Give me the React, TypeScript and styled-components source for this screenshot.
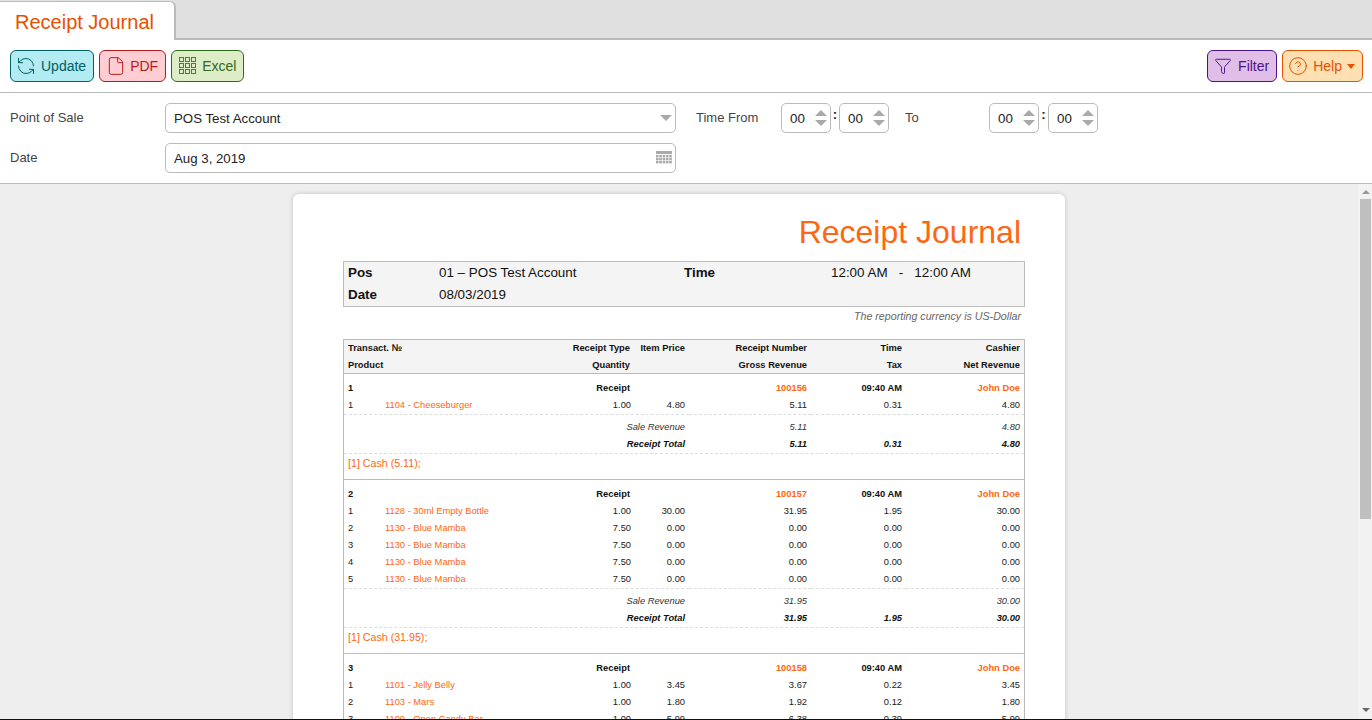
import React from "react";
import styled, { createGlobalStyle } from "styled-components";
import { RefreshCcw, File, Funnel, CircleHelp } from "lucide-react";

const GlobalStyle = createGlobalStyle`
  html, body {
    margin: 0;
    height: 100%;
    overflow: hidden;
    font-family: "Liberation Sans", Arial, sans-serif;
  }
`;

const palette = {
  update: { bg: "#b2ebf2", fg: "#006064", gap: 6, shift: -2 },
  pdf: { bg: "#ffcdd2", fg: "#b71c1c", gap: 5, shift: -1 },
  excel: { bg: "#dcedc8", fg: "#33691e", gap: 6, shift: 0 },
  filter: { bg: "#e1bee7", fg: "#4a148c", gap: 7, shift: -1 },
  help: { bg: "#ffe0b2", fg: "#e65100", gap: 6, shift: -2 },
};

type Tone = keyof typeof palette;

const Page = styled.div`
  display: flex;
  flex-direction: column;
  height: 720px;
  box-sizing: border-box;
  border-bottom: 1px solid #0d0d2b;
  background: #fff;
`;

const TabStrip = styled.div`
  display: flex;
  flex: none;
  height: 40px;
  box-sizing: border-box;
  background: #e0e0e0;
  border-bottom: 2px solid #bbb;
`;

const Tab = styled.div`
  height: 39px;
  box-sizing: border-box;
  width: 176px;
  margin-top: 1px;
  padding: 8px 0 0 15px;
  background: #fff;
  border: 1px solid #bbb;
  border-width: 1px 2px 0 0;
  border-top-right-radius: 6px;
  color: #e65100;
  font-size: 20px;
  line-height: 24px;
`;

const Toolbar = styled.div`
  display: flex;
  flex: none;
  justify-content: space-between;
  height: 53px;
  box-sizing: border-box;
  padding: 10px 9px 0 10px;
  border-bottom: 1px solid #bbb;
`;

const ButtonGroup = styled.div`
  display: flex;
  gap: 5px;
`;

const ToolButton = styled.div<{ $tone: Tone }>`
  display: flex;
  align-items: center;
  gap: ${(p) => palette[p.$tone].gap}px;
  height: 32px;
  box-sizing: border-box;
  padding: 0 7px;
  border: 1px solid ${(p) => palette[p.$tone].fg};
  border-radius: 6px;
  background: ${(p) => palette[p.$tone].bg};
  color: ${(p) => palette[p.$tone].fg};
  font-size: 14px;

  svg {
    flex: none;
    margin-left: ${(p) => palette[p.$tone].shift}px;
    margin-right: -1px;
  }
`;

const Caret = styled.span`
  width: 0;
  height: 0;
  margin-left: -1px;
  border: 4px solid transparent;
  border-top: 5px solid #e65100;
  border-bottom: 0;
`;

const FilterForm = styled.div`
  display: flex;
  flex: none;
  flex-direction: column;
  gap: 10px;
  height: 91px;
  box-sizing: border-box;
  padding: 10px;
  border-bottom: 1px solid #bbb;
`;

const FormRow = styled.div`
  display: flex;
  align-items: center;
  height: 30px;
`;

const FieldLabel = styled.div<{ $width: number; $gap?: number }>`
  width: ${(p) => p.$width}px;
  margin-left: ${(p) => p.$gap ?? 0}px;
  margin-top: -2px;
  color: #444;
  font-size: 13px;
`;

const Field = styled.div`
  display: flex;
  align-items: center;
  justify-content: space-between;
  width: 511px;
  height: 30px;
  box-sizing: border-box;
  padding: 0 3px 0 8px;
  border: 1px solid #bbb;
  border-radius: 5px;
  color: #222;
  font-size: 13.25px;
`;

const SelectArrow = styled.span`
  width: 0;
  height: 0;
  border: 6px solid transparent;
  border-top: 6px solid #aaa;
  border-bottom: 0;
`;

const Spinner = styled.div`
  display: flex;
  align-items: center;
  justify-content: space-between;
  width: 50px;
  height: 30px;
  box-sizing: border-box;
  padding: 0 3px 0 8px;
  border: 1px solid #bbb;
  border-radius: 5px;
  color: #222;
  font-size: 13.33px;
`;

const SpinArrows = styled.div`
  display: flex;
  flex-direction: column;
  gap: 4px;
`;

const SpinArrow = styled.span<{ $up?: boolean }>`
  width: 0;
  height: 0;
  border: 6px solid transparent;
  border-${(p) => (p.$up ? "bottom" : "top")}: 6px solid #aaa;
  border-${(p) => (p.$up ? "top" : "bottom")}: 0;
`;

const Colon = styled.div<{ $width: number }>`
  width: ${(p) => p.$width}px;
  margin-top: -8px;
  text-align: center;
  color: #222;
  font-size: 13.33px;
  font-weight: bold;
`;

const ReportArea = styled.div`
  display: flex;
  flex: 1;
  min-height: 0;
`;

const ReportScroller = styled.div`
  flex: 1;
  min-width: 0;
  overflow: hidden;
  background: #eee;
`;

const ScrollRail = styled.div`
  display: flex;
  flex: none;
  flex-direction: column;
  align-items: flex-start;
  width: 14px;
  background: #f2f2f2;
`;

const RailArrow = styled.span<{ $down?: boolean }>`
  width: 0;
  height: 0;
  margin: ${(p) => (p.$down ? "auto 0 7px 4px" : "6px 0 0 4px")};
  border: 4px solid transparent;
  border-${(p) => (p.$down ? "top" : "bottom")}: 4px solid ${(p) => (p.$down ? "#666" : "#999")};
  border-${(p) => (p.$down ? "bottom" : "top")}: 0;
`;

const RailThumb = styled.div`
  width: 11px;
  height: 320px;
  margin: 5px 0 0 2px;
  background: #bfbfbf;
`;

const ReportCard = styled.div`
  width: 772px;
  box-sizing: border-box;
  margin: 10px auto;
  padding: 20px 40px 40px 50px;
  background: #fff;
  border-radius: 6px;
  box-shadow: 0 0 5px rgba(0, 0, 0, 0.18);
`;

const ReportTitle = styled.div`
  height: 47px;
  padding-right: 4px;
  text-align: right;
  color: #ff6610;
  font-size: 32px;
  line-height: 37px;
`;

const InfoTable = styled.table`
  width: 682px;
  table-layout: fixed;
  border-collapse: separate;
  border-spacing: 0;
  border: 1px solid #bbb;
  background: #f4f4f4;
  color: #111;
  font-size: 13.4px;

  td {
    height: 22px;
    box-sizing: border-box;
    padding: 0 4px 2px;
    white-space: pre;
  }
`;

const InfoLabel = styled.td`
  font-weight: bold;
`;

const CurrencyNote = styled.div`
  height: 32px;
  padding: 2px 4px 0 0;
  box-sizing: border-box;
  text-align: right;
  color: #666;
  font-size: 10.67px;
  font-style: italic;
  line-height: 15px;
`;

const JournalTable = styled.table`
  width: 682px;
  table-layout: fixed;
  border-collapse: separate;
  border-spacing: 0;
  border: 1px solid #bbb;
  color: #222;
  font-size: 9.33px;

  td {
    padding: 0 4px 1px;
    height: 17px;
    box-sizing: border-box;
    white-space: nowrap;
    text-align: right;
    line-height: 16px;
  }
`;

const HeadRow = styled.tr<{ $last?: boolean }>`
  background: #f4f4f4;
  color: #111;
  font-weight: bold;

  td {
    padding-bottom: ${(p) => (p.$last ? 0 : 1)}px;
    border-bottom: ${(p) => (p.$last ? "1px solid #bbb" : "0")};
  }
`;

const GroupRow = styled.tr`
  color: #111;
  font-weight: bold;

  td {
    height: 23px;
    padding-top: 6px;
  }
`;

const SumRow = styled.tr<{ $first?: boolean; $total?: boolean }>`
  font-style: italic;
  font-weight: ${(p) => (p.$total ? "bold" : "normal")};
  color: ${(p) => (p.$total ? "#111" : "#333")};

  td {
    height: ${(p) => (p.$first ? 22 : 17)}px;
    padding-top: ${(p) => (p.$first ? 4 : 0)}px;
    border-top: ${(p) => (p.$first ? "1px dashed #ddd" : "0")};
  }
`;

const PaymentCell = styled.td`
  && {
    height: 27px;
    padding: 0 4px 7px;
    border-top: 1px dashed #ddd;
    border-bottom: 1px solid #bbb;
    text-align: left;
    color: #ff6610;
    font-size: 10.67px;
  }
`;

const LeftCell = styled.td`
  && {
    text-align: left;
  }
`;

const ProductCell = styled.td`
  && {
    text-align: left;
    color: #ff6610;
  }
`;

const QtyCell = styled.td`
  && {
    padding-right: 3px;
  }
`;

const AccentCell = styled.td`
  color: #ff6610;
`;

const ExcelIcon = () => (
  <svg width="18" height="18" viewBox="0 0 18 18" fill="none" stroke="currentColor" strokeWidth="1" opacity="0.85">
    {[1, 7, 13].map((y) =>
      [1, 7, 13].map((x) => <rect key={`${x}-${y}`} x={x - 0.5} y={y - 0.5} width="4" height="4" />)
    )}
  </svg>
);

const CalendarIcon = () => (
  <svg width="16" height="14" viewBox="0 0 16 14" fill="#aaa">
    <rect x="0" y="0" width="16" height="3" />
    {[4, 7, 10].map((y) =>
      [0, 3.3, 6.6, 9.9, 13.2].map((x) => <rect key={`${x}-${y}`} x={x} y={y} width="2.6" height="2.4" />)
    )}
  </svg>
);

const TimeSpinner = () => (
  <Spinner>
    00
    <SpinArrows>
      <SpinArrow $up />
      <SpinArrow />
    </SpinArrows>
  </Spinner>
);

interface Item {
  product: string;
  qty: string;
  price: string;
  gross: string;
  tax: string;
  net: string;
}

interface Receipt {
  number: string;
  time: string;
  gross: string;
  tax: string;
  net: string;
  payment: string;
  items: Item[];
}

const item = (product: string, qty: string, price: string, gross: string, tax: string, net: string): Item => ({
  product,
  qty,
  price,
  gross,
  tax,
  net,
});

const receipts: Receipt[] = [
  {
    number: "100156",
    time: "09:40 AM",
    gross: "5.11",
    tax: "0.31",
    net: "4.80",
    payment: "[1] Cash (5.11);",
    items: [item("1104 - Cheeseburger", "1.00", "4.80", "5.11", "0.31", "4.80")],
  },
  {
    number: "100157",
    time: "09:40 AM",
    gross: "31.95",
    tax: "1.95",
    net: "30.00",
    payment: "[1] Cash (31.95);",
    items: [
      item("1128 - 30ml Empty Bottle", "1.00", "30.00", "31.95", "1.95", "30.00"),
      item("1130 - Blue Mamba", "7.50", "0.00", "0.00", "0.00", "0.00"),
      item("1130 - Blue Mamba", "7.50", "0.00", "0.00", "0.00", "0.00"),
      item("1130 - Blue Mamba", "7.50", "0.00", "0.00", "0.00", "0.00"),
      item("1130 - Blue Mamba", "7.50", "0.00", "0.00", "0.00", "0.00"),
    ],
  },
  {
    number: "100158",
    time: "09:40 AM",
    gross: "11.97",
    tax: "0.73",
    net: "11.24",
    payment: "[1] Cash (11.97);",
    items: [
      item("1101 - Jelly Belly", "1.00", "3.45", "3.67", "0.22", "3.45"),
      item("1103 - Mars", "1.00", "1.80", "1.92", "0.12", "1.80"),
      item("1109 - Open Candy Bar", "1.00", "5.99", "6.38", "0.39", "5.99"),
    ],
  },
];

const App: React.FC = () => {
  return (
    <Page>
      <GlobalStyle />
      <TabStrip>
        <Tab>Receipt Journal</Tab>
      </TabStrip>
      <Toolbar>
        <ButtonGroup>
          <ToolButton $tone="update">
            <RefreshCcw size={20} strokeWidth={1.2} />
            Update
          </ToolButton>
          <ToolButton $tone="pdf">
            <File size={20} strokeWidth={1.2} />
            PDF
          </ToolButton>
          <ToolButton $tone="excel">
            <ExcelIcon />
            Excel
          </ToolButton>
        </ButtonGroup>
        <ButtonGroup>
          <ToolButton $tone="filter">
            <Funnel size={18} strokeWidth={1.3} />
            Filter
          </ToolButton>
          <ToolButton $tone="help">
            <CircleHelp size={20} strokeWidth={1.2} />
            Help
            <Caret />
          </ToolButton>
        </ButtonGroup>
      </Toolbar>
      <FilterForm>
        <FormRow>
          <FieldLabel $width={155}>Point of Sale</FieldLabel>
          <Field>
            POS Test Account
            <SelectArrow />
          </Field>
          <FieldLabel $width={85} $gap={20}>
            Time From
          </FieldLabel>
          <TimeSpinner />
          <Colon $width={8}>:</Colon>
          <TimeSpinner />
          <FieldLabel $width={84} $gap={16}>
            To
          </FieldLabel>
          <TimeSpinner />
          <Colon $width={9}>:</Colon>
          <TimeSpinner />
        </FormRow>
        <FormRow>
          <FieldLabel $width={155}>Date</FieldLabel>
          <Field>
            Aug 3, 2019
            <CalendarIcon />
          </Field>
        </FormRow>
      </FilterForm>
      <ReportArea>
        <ReportScroller>
          <ReportCard>
            <ReportTitle>Receipt Journal</ReportTitle>
            <InfoTable>
              <colgroup>
                <col width="91" />
                <col width="245" />
                <col width="147" />
                <col width="197" />
              </colgroup>
              <tbody>
                <tr>
                  <InfoLabel>Pos</InfoLabel>
                  <td>01 – POS Test Account</td>
                  <InfoLabel>Time</InfoLabel>
                  <td>12:00 AM   -   12:00 AM</td>
                </tr>
                <tr>
                  <InfoLabel>Date</InfoLabel>
                  <td>08/03/2019</td>
                  <td />
                  <td />
                </tr>
              </tbody>
            </InfoTable>
            <CurrencyNote>The reporting currency is US-Dollar</CurrencyNote>
            <JournalTable>
              <colgroup>
                <col width="37" />
                <col width="180" />
                <col width="73" />
                <col width="55" />
                <col width="122" />
                <col width="95" />
                <col width="118" />
              </colgroup>
              <tbody>
                <HeadRow>
                  <LeftCell colSpan={2}>Transact. №</LeftCell>
                  <td>Receipt Type</td>
                  <td>Item Price</td>
                  <td>Receipt Number</td>
                  <td>Time</td>
                  <td>Cashier</td>
                </HeadRow>
                <HeadRow $last>
                  <LeftCell colSpan={2}>Product</LeftCell>
                  <td>Quantity</td>
                  <td />
                  <td>Gross Revenue</td>
                  <td>Tax</td>
                  <td>Net Revenue</td>
                </HeadRow>
                {receipts.map((r, i) => (
                  <React.Fragment key={r.number}>
                    <GroupRow>
                      <LeftCell colSpan={2}>{i + 1}</LeftCell>
                      <td>Receipt</td>
                      <td />
                      <AccentCell>{r.number}</AccentCell>
                      <td>{r.time}</td>
                      <AccentCell>John Doe</AccentCell>
                    </GroupRow>
                    {r.items.map((it, n) => (
                      <tr key={n}>
                        <LeftCell>{n + 1}</LeftCell>
                        <ProductCell>{it.product}</ProductCell>
                        <QtyCell>{it.qty}</QtyCell>
                        <td>{it.price}</td>
                        <td>{it.gross}</td>
                        <td>{it.tax}</td>
                        <td>{it.net}</td>
                      </tr>
                    ))}
                    <SumRow $first>
                      <td colSpan={4}>Sale Revenue</td>
                      <td>{r.gross}</td>
                      <td />
                      <td>{r.net}</td>
                    </SumRow>
                    <SumRow $total>
                      <td colSpan={4}>Receipt Total</td>
                      <td>{r.gross}</td>
                      <td>{r.tax}</td>
                      <td>{r.net}</td>
                    </SumRow>
                    <tr>
                      <PaymentCell colSpan={7}>{r.payment}</PaymentCell>
                    </tr>
                  </React.Fragment>
                ))}
              </tbody>
            </JournalTable>
          </ReportCard>
        </ReportScroller>
        <ScrollRail>
          <RailArrow />
          <RailThumb />
          <RailArrow $down />
        </ScrollRail>
      </ReportArea>
    </Page>
  );
};

export default App;
